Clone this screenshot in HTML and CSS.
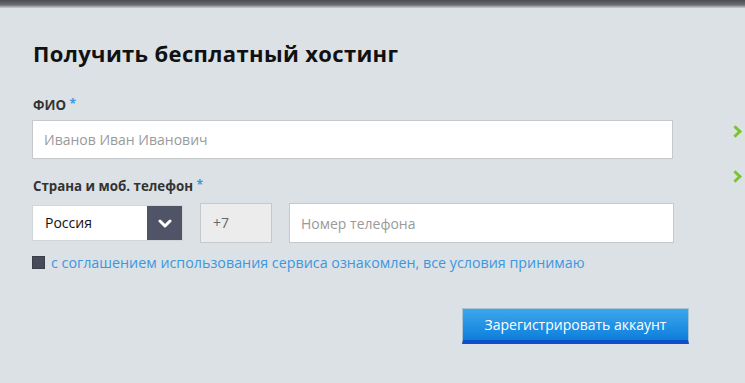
FILE: index.html
```html
<!DOCTYPE html>
<html lang="ru">
<head>
    <meta charset="UTF-8">
    <meta name="viewport" content="width=device-width, initial-scale=1.0">
    <title>Бесплатный хостинг</title>
    <link rel="stylesheet" href="styles.css">
</head>
<body>

<div class="top-bar"></div>

<div class="page">
    <form class="signup-form">
        <h1>Получить бесплатный хостинг</h1>

        <label class="field-label">ФИО <span class="req">*</span></label>
        <input type="text" class="text-input full" placeholder="Иванов Иван Иванович">

        <label class="field-label">Страна и моб. телефон <span class="req">*</span></label>
        <div class="phone-row">
            <div class="country-select">
                <span class="country-name">Россия</span>
                <span class="select-arrow">
                    <svg width="14" height="9" viewBox="0 0 14 9"><path d="M2 2 L7 7 L12 2" fill="none" stroke="#fff" stroke-width="3" stroke-linecap="round" stroke-linejoin="round"/></svg>
                </span>
            </div>
            <div class="phone-code">+7</div>
            <input type="text" class="text-input phone-input" placeholder="Номер телефона">
        </div>

        <div class="agree-row">
            <span class="checkbox"></span>
            <a href="#" class="agree-link">с соглашением использования сервиса ознакомлен, все условия принимаю</a>
        </div>

        <div class="actions">
            <button type="button" class="submit-button">Зарегистрировать аккаунт</button>
        </div>
    </form>

    <div class="side-arrows">
        <span class="chevron"></span>
        <span class="chevron"></span>
    </div>
</div>

</body>
</html>
```

FILE: styles.css
```css
/* Global Styles */
body {
    font-family: 'Open Sans', 'Noto Sans', sans-serif;
    background: #dbe1e5;
    color: #222;
    margin: 0;
    padding: 0;
    height: 383px;
    overflow: hidden;
}

.top-bar {
    height: 8px;
    background: linear-gradient(to bottom, #4a4c4f, #6b6e72 60%, #c9cfd3);
}

.page {
    display: flex;
    justify-content: space-between;
    padding: 0 5px 0 32px;
}

.signup-form {
    width: 657px;
    display: flex;
    flex-direction: column;
}

.signup-form h1 {
    font-size: 22px;
    font-weight: 700;
    color: #111;
    margin: 30px 0 0 1px;
    line-height: 30px;
    letter-spacing: 0.35px;
}

.field-label {
    font-size: 13.3px;
    font-weight: 700;
    color: #333;
    margin: 27px 0 6px 1px;
    line-height: 18px;
}

.text-input.full + .field-label {
    margin-top: 17px;
}

.req {
    color: #3d97de;
    font-size: 12px;
    vertical-align: 2px;
}

.text-input {
    box-sizing: border-box;
    height: 39px;
    border: 1px solid #c6c9cb;
    box-shadow: inset 0 0 0 1px #fff;
    background: #fff;
    font-family: inherit;
    font-size: 14px;
    padding: 0 11px;
    color: #333;
    outline: none;
}

.text-input::placeholder {
    color: #9a9a9a;
}

.text-input.full {
    width: 641px;
}

.phone-row {
    display: flex;
    align-items: center;
    margin-top: 2px;
}

.country-select {
    box-sizing: border-box;
    width: 151px;
    height: 36px;
    border: 1px solid #d3d6d8;
    background: #fff;
    display: flex;
    align-items: stretch;
}

.country-name {
    flex: 1;
    font-size: 14px;
    color: #111;
    line-height: 34px;
    padding-left: 12px;
}

.select-arrow {
    width: 35px;
    background: #4f5566;
    display: flex;
    align-items: center;
    justify-content: center;
}

.phone-code {
    box-sizing: border-box;
    width: 72px;
    height: 40px;
    margin-left: 17px;
    border: 1px solid #c6c9cb;
    background: #ececec;
    font-size: 14px;
    color: #666;
    line-height: 38px;
    padding-left: 12px;
}

.phone-input {
    width: 385px;
    height: 40px;
    margin-left: 17px;
}

.agree-row {
    display: flex;
    align-items: center;
    gap: 6px;
    margin-top: 10px;
}

.checkbox {
    width: 13px;
    height: 13px;
    background: #474c58;
    border: 1px solid #3a3e48;
    box-sizing: border-box;
}

.agree-link {
    font-size: 14.3px;
    color: #3b97df;
    text-decoration: none;
}

.actions {
    display: flex;
    justify-content: flex-end;
    margin-top: 36px;
}

.submit-button {
    width: 227px;
    height: 36px;
    border: 1px solid #a9c2d4;
    border-bottom: 4px solid #0b4fcb;
    background: linear-gradient(to bottom, #3ba8ec, #0e7edc);
    color: #fff;
    font-family: inherit;
    font-size: 14px;
    cursor: pointer;
    padding: 0;
}

.side-arrows {
    display: flex;
    flex-direction: column;
    gap: 36px;
    padding-top: 119px;
}

.chevron {
    width: 6px;
    height: 6px;
    border-top: 3px solid #7ac530;
    border-right: 3px solid #7ac530;
    transform: rotate(45deg);
}
```
